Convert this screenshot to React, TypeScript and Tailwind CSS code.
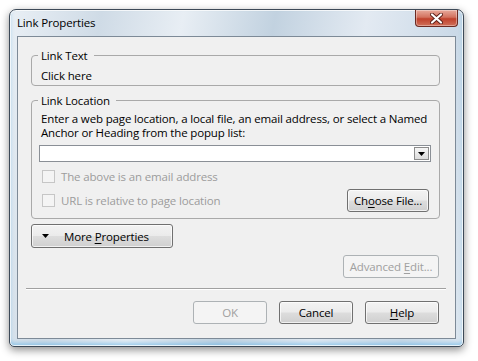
import React from 'react';

const font = { fontFamily: '"Segoe UI", "Open Sans", "Noto Sans", sans-serif' };

function VistaButton({
  children,
  className,
  disabled,
}: {
  children: React.ReactNode;
  className?: string;
  disabled?: boolean;
}) {
  return (
    <div
      className={
        'flex items-center justify-center rounded-[3px] border ' +
        (disabled
          ? 'border-[#adb2b5] bg-[#f4f4f4] text-[#a0a0a0] '
          : 'border-[#707070] bg-[linear-gradient(to_bottom,#f3f3f3_0%,#ebebeb_48%,#dddddd_52%,#cfcfcf_100%)] text-black shadow-[inset_0_0_0_1px_rgba(255,255,255,0.7)] ') +
        (className || '')
      }
    >
      {children}
    </div>
  );
}

function Checkbox({ label }: { label: string }) {
  return (
    <div className="flex items-center">
      <div className="ml-[4px] h-[13px] w-[13px] border border-[#c6c6c6] bg-[#f4f4f4]" />
      <span className="ml-[6px] text-[#9c9c9c]">{label}</span>
    </div>
  );
}

export default function App() {
  return (
    <div className="h-[361px] w-[478px] overflow-hidden bg-white pl-[9px] pt-[9px]" style={font}>
      {/* ウィンドウ枠 (Vista Aero) */}
      <div className="flex h-[338px] w-[455px] flex-col rounded-t-[7px] rounded-b-[5px] border border-[#3d4a58] bg-[linear-gradient(100deg,#e9eff5_0%,#cfdbe6_18%,#e8eef4_34%,#c2d2e0_52%,#e3eaf2_70%,#cad9e7_88%,#dde7f0_100%)] shadow-[inset_0_0_0_1px_rgba(255,255,255,0.75),inset_0_-3px_4px_rgba(90,175,230,0.55),0_3px_9px_rgba(0,0,0,0.45)]">
        {/* タイトルバー */}
        <div className="flex h-[26px] items-start justify-between pl-[7px] pr-[5px]">
          <span className="self-center text-[11.5px] tracking-[-0.15px] text-black">Link Properties</span>
          <div className="flex h-[17px] w-[43px] items-center justify-center rounded-b-[4px] border border-t-0 border-[#6b2a22] bg-[linear-gradient(to_bottom,#e8aa9c_0%,#d3725f_45%,#c0412c_55%,#d0705a_100%)] shadow-[inset_0_0_0_1px_rgba(255,255,255,0.35)]">
            <svg width="13" height="11" viewBox="0 0 13 11">
              <path d="M2 1.5 L11 9.5 M11 1.5 L2 9.5" stroke="#5a1f18" strokeWidth="4" strokeLinecap="round" />
              <path d="M2 1.5 L11 9.5 M11 1.5 L2 9.5" stroke="#ffffff" strokeWidth="2.2" strokeLinecap="round" />
            </svg>
          </div>
        </div>

        {/* クライアント領域 */}
        <div className="ml-[7px] h-[303px] w-[439px] border border-[#7d8a97] bg-[#f0f0f0] text-[11.5px] leading-[15px] tracking-[-0.15px] text-black">
          <div className="flex flex-col px-[13px]">
            {/* Link Text */}
            <fieldset className="mt-[11px] w-[409px] rounded-[4px] border border-[#a9a9a9] pl-[6px] pr-[7px] pb-[2px] pt-[5px]">
              <legend className="pl-[3px] pr-[6px]">Link Text</legend>
              <div className="px-[3px]">Click here</div>
            </fieldset>

            {/* Link Location */}
            <fieldset className="mt-[7px] w-[409px] rounded-[4px] border border-[#a9a9a9] pl-[6px] pr-[8px] pb-[6px] pt-[4px]">
              <legend className="pl-[3px] pr-[6px]">Link Location</legend>
              <div className="px-[3px] leading-[14px]">
                Enter a web page location, a local file, an email address, or select a Named Anchor or Heading from the popup list:
              </div>
              <div className="ml-[1px] mt-[5px] flex h-[17px] items-center justify-end border border-[#8a8f96] bg-white pr-[1px]">
                <div className="flex h-[13px] w-[15px] items-center justify-center border border-[#8c8c8c] bg-[linear-gradient(to_bottom,#f6f6f6,#dcdcdc)]">
                  <svg width="7" height="4" viewBox="0 0 7 4">
                    <path d="M0 0 H7 L3.5 4 Z" fill="#000" />
                  </svg>
                </div>
              </div>
              <div className="mt-[2px] flex h-[25px] items-center">
                <Checkbox label="The above is an email address" />
              </div>
              <div className="flex h-[23px] items-center justify-between">
                <Checkbox label="URL is relative to page location" />
                <VistaButton className="mr-[2px] h-[23px] w-[82px]">
                  <span>
                    Ch<span className="underline underline-offset-2">o</span>ose File...
                  </span>
                </VistaButton>
              </div>
            </fieldset>

            {/* More Properties */}
            <VistaButton className="mt-[5px] h-[24px] w-[142px] !justify-start">
              <svg className="ml-[10px]" width="7" height="4" viewBox="0 0 7 4">
                <path d="M0 0 H7 L3.5 4 Z" fill="#000" />
              </svg>
              <span className="ml-[15px]">
                More <span className="underline underline-offset-2">P</span>roperties
              </span>
            </VistaButton>

            {/* Advanced Edit */}
            <div className="mt-[7px] flex justify-end pr-[3px]">
              <VistaButton disabled className="h-[23px] w-[96px]">
                <span>
                  Advanced <span className="underline underline-offset-2">E</span>dit...
                </span>
              </VistaButton>
            </div>
          </div>

          {/* 区切り線 */}
          <div className="ml-[8px] mr-[9px] mt-[10px] h-px bg-[#a0a0a0] shadow-[0_1px_0_#ffffff]" />

          {/* ダイアログボタン */}
          <div className="mt-[12px] flex justify-end gap-[12px] pr-[16px]">
            <VistaButton disabled className="h-[23px] w-[74px]">
              OK
            </VistaButton>
            <VistaButton className="h-[23px] w-[74px]">Cancel</VistaButton>
            <VistaButton className="h-[23px] w-[74px]">
              <span>
                <span className="underline underline-offset-2">H</span>elp
              </span>
            </VistaButton>
          </div>
        </div>
      </div>
    </div>
  );
}
